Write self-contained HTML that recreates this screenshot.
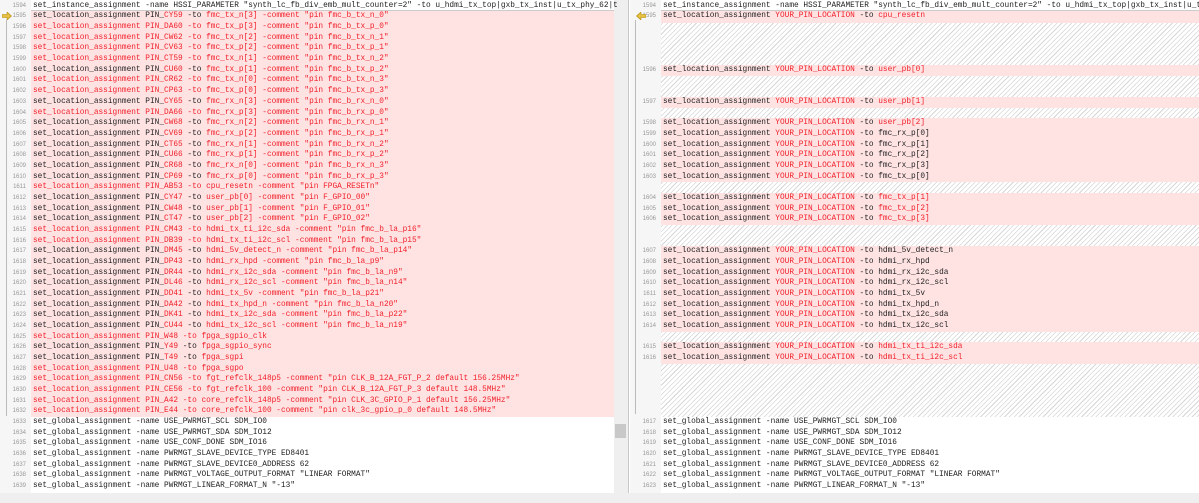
<!DOCTYPE html>
<html><head><meta charset="utf-8"><style>
*{margin:0;padding:0;box-sizing:border-box}
body{width:1199px;height:503px;overflow:hidden;background:#fff;position:relative;font-family:"Liberation Mono",monospace;font-size:7.8px;color:#222}
.gut{position:absolute;top:0;height:493px;background:#f6f6f6}
.row{position:absolute;left:0;height:10.7px;line-height:10.7px;white-space:pre;width:100%}
.n{position:absolute;width:26px;text-align:right;font-size:6px;color:#999;font-family:"Liberation Sans",sans-serif}
.t{position:absolute}
.p{background:#ffe3e3}
.h{background:repeating-linear-gradient(135deg,#fff 0,#fff 2.6px,#d6d6d6 2.6px,#d6d6d6 3.4px)}
b{font-weight:normal;color:#f0202a}
</style></head><body>
<div class="gut" style="left:0;width:31px"></div>
<div class="gut" style="left:630px;width:31px"></div>
<div style="position:absolute;left:614px;top:0;width:14px;height:493px;background:#efefef"></div>
<div style="position:absolute;left:615px;top:424px;width:11px;height:14px;background:#c8c8c8"></div>
<div style="position:absolute;left:628px;top:0;width:1px;height:493px;background:#c8c8c8"></div>
<div style="position:absolute;left:6px;top:20px;width:1px;height:396px;background:#bbb"></div>
<div style="position:absolute;left:635px;top:20px;width:1px;height:394px;background:#bbb"></div>
<div style="position:absolute;left:0;top:493px;width:1199px;height:10px;background:#efefef"></div>
<div id="L"></div>
<svg style="position:absolute;left:2px;top:12px" width="10" height="8"><path d="M0 2.5H5V0L9.5 4 5 8V5.5H0Z" fill="#e8c040" stroke="#b08a10" stroke-width=".6"/></svg>
<svg style="position:absolute;left:636px;top:12px" width="10" height="8"><path d="M10 2.5H5V0L0.5 4 5 8V5.5H10Z" fill="#e8c040" stroke="#b08a10" stroke-width=".6"/></svg>
<script>
var L=[
['set_instance_assignment -name HSSI_PARAMETER "synth_lc_fb_div_emb_mult_counter=2" -to u_hdmi_tx_top|gxb_tx_inst|u_tx_phy_62|t',0],
['CY59','fmc_tx_n[3]','pin fmc_b_tx_n_0',0],['DA60','fmc_tx_p[3]','pin fmc_b_tx_p_0',1],['CW62','fmc_tx_n[2]','pin fmc_b_tx_n_1',1],['CV63','fmc_tx_p[2]','pin fmc_b_tx_p_1',1],['CT59','fmc_tx_n[1]','pin fmc_b_tx_n_2',1],['CU60','fmc_tx_p[1]','pin fmc_b_tx_p_2',0],['CR62','fmc_tx_n[0]','pin fmc_b_tx_n_3',1],['CP63','fmc_tx_p[0]','pin fmc_b_tx_p_3',1],
['CY65','fmc_rx_n[3]','pin fmc_b_rx_n_0',0],['DA66','fmc_rx_p[3]','pin fmc_b_rx_p_0',1],['CW68','fmc_rx_n[2]','pin fmc_b_rx_n_1',0],['CV69','fmc_rx_p[2]','pin fmc_b_rx_p_1',0],['CT65','fmc_rx_n[1]','pin fmc_b_rx_n_2',0],['CU66','fmc_rx_p[1]','pin fmc_b_rx_p_2',0],['CR68','fmc_rx_n[0]','pin fmc_b_rx_n_3',0],['CP69','fmc_rx_p[0]','pin fmc_b_rx_p_3',0],
['AB53','cpu_resetn','pin FPGA_RESETn',1],['CY47','user_pb[0]','pin F_GPIO_00',0],['CW48','user_pb[1]','pin F_GPIO_01',0],['CT47','user_pb[2]','pin F_GPIO_02',0],
['CM43','hdmi_tx_ti_i2c_sda','pin fmc_b_la_p16',1],['DB39','hdmi_tx_ti_i2c_scl','pin fmc_b_la_p15',1],['DM45','hdmi_5v_detect_n','pin fmc_b_la_p14',0],['DP43','hdmi_rx_hpd','pin fmc_b_la_p9',0],['DR44','hdmi_rx_i2c_sda','pin fmc_b_la_n9',0],['DL46','hdmi_rx_i2c_scl','pin fmc_b_la_n14',0],['DD41','hdmi_tx_5v','pin fmc_b_la_p21',0],['DA42','hdmi_tx_hpd_n','pin fmc_b_la_n20',0],['DK41','hdmi_tx_i2c_sda','pin fmc_b_la_p22',0],['CU44','hdmi_tx_i2c_scl','pin fmc_b_la_n19',0],
['W48','fpga_sgpio_clk','',1],['Y49','fpga_sgpio_sync','',0],['T49','fpga_sgpi','',0],['U48','fpga_sgpo','',1],
['CN56','fgt_refclk_148p5','pin CLK_B_12A_FGT_P_2 default 156.25MHz',1],['CE56','fgt_refclk_100','pin CLK_B_12A_FGT_P_3 default 148.5MHz',1],['A42','core_refclk_148p5','pin CLK_3C_GPIO_P_1 default 156.25MHz',1],['E44','core_refclk_100','pin clk_3c_gpio_p_0 default 148.5MHz',1]];
var G=['USE_PWRMGT_SCL SDM_IO0','USE_PWRMGT_SDA SDM_IO12','USE_CONF_DONE SDM_IO16','PWRMGT_SLAVE_DEVICE_TYPE ED8401','PWRMGT_SLAVE_DEVICE0_ADDRESS 62','PWRMGT_VOLTAGE_OUTPUT_FORMAT "LINEAR FORMAT"','PWRMGT_LINEAR_FORMAT_N "-13"'];
var LH=10.67,T0=0.8;
function y(i){return (T0+i*LH).toFixed(2)}
function row(left,w,top,num,cls,html,border){return '<div class="row '+cls+'" style="left:'+left+'px;width:'+w+'px;top:'+top+'px'+(border?';border-bottom:1px solid #ccc':'')+'"><span class="n" style="left:-31px">'+num+'</span><span class="t" style="left:2px">'+html+'</span></div>';}
var h='';
/* continuous backgrounds */
h+='<div class="p" style="position:absolute;left:31px;width:583px;top:'+y(1)+'px;height:'+(38*LH).toFixed(2)+'px"></div>';
h+='<div class="h" style="position:absolute;left:661px;width:538px;top:'+y(1)+'px;height:'+(38*LH).toFixed(2)+'px"></div>';
h+=row(31,583,y(0),1594,'',L[0][0],1);
for(var i=1;i<L.length;i++){var a=L[i],s;
 if(a[3]) s='<b>set_location_assignment PIN_'+a[0]+' -to '+a[1]+(a[2]?' -comment "'+a[2]+'"':'')+'</b>';
 else s='set_location_assignment PIN_<b>'+a[0]+'</b> -to <b>'+a[1]+(a[2]?' -comment "'+a[2]+'"':'')+'</b>';
 h+=row(31,583,y(i),1594+i,'',s);}
for(var j=0;j<G.length;j++)h+=row(31,583,y(39+j),1633+j,'','set_global_assignment -name '+G[j]);
var R={1:'cpu_resetn',6:'user_pb[0]',9:'user_pb[1]',11:'user_pb[2]',12:'fmc_rx_p[0]',13:'fmc_rx_p[1]',14:'fmc_rx_p[2]',15:'fmc_rx_p[3]',16:'fmc_tx_p[0]',18:'fmc_tx_p[1]',19:'fmc_tx_p[2]',20:'fmc_tx_p[3]',23:'hdmi_5v_detect_n',24:'hdmi_rx_hpd',25:'hdmi_rx_i2c_sda',26:'hdmi_rx_i2c_scl',27:'hdmi_tx_5v',28:'hdmi_tx_hpd_n',29:'hdmi_tx_i2c_sda',30:'hdmi_tx_i2c_scl',32:'hdmi_tx_ti_i2c_sda',33:'hdmi_tx_ti_i2c_scl'};
var red={1:1,6:1,9:1,11:1,18:1,19:1,20:1,32:1,33:1};
h+=row(661,538,y(0),1594,'',L[0][0].replace('u_tx_phy_62|t','u_t'),1);
var n=1595;
for(var k=1;k<=38;k++){
 if(R[k]){var v=red[k]?'<b>'+R[k]+'</b>':R[k];
  var st=k>1&&R[k-1]?(T0+k*LH-0.5).toFixed(2):y(k);
  h+='<div class="p" style="position:absolute;left:661px;width:538px;top:'+st+'px;height:'+(LH+0.6).toFixed(2)+'px"></div>';
  h+=row(661,538,y(k),n++,'','set_location_assignment <b>YOUR_PIN_LOCATION</b> -to '+v);}}
for(var j=0;j<G.length;j++)h+=row(661,538,y(39+j),1617+j,'','set_global_assignment -name '+G[j]);
document.getElementById('L').innerHTML=h;
</script>
</body></html>
